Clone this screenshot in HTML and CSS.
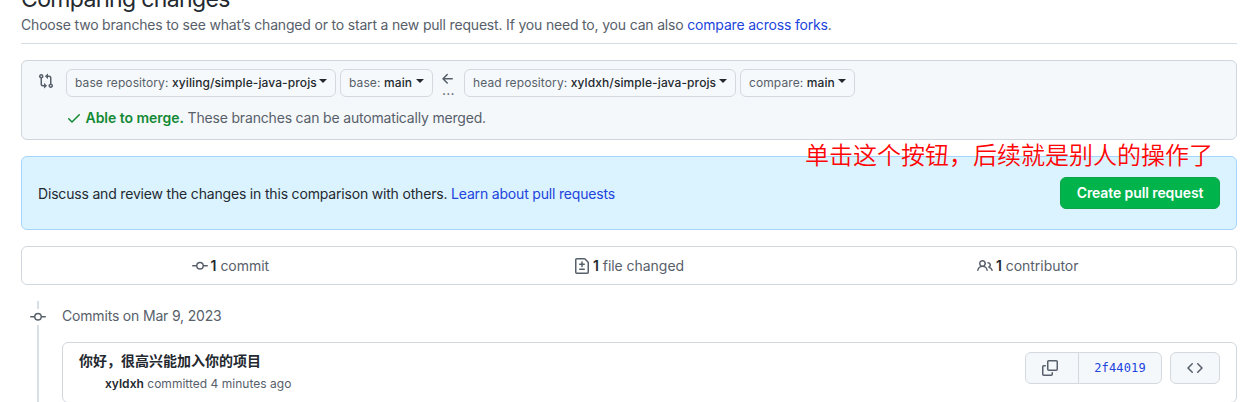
FILE: index.html
```html
<!DOCTYPE html>
<html lang="en">
<head>
<meta charset="utf-8">
<title>Comparing changes</title>
<link rel="stylesheet" href="styles.css">
</head>
<body>
<main class="page">
  <header class="subhead">
    <h1 class="title">Comparing changes</h1>
    <p class="description">Choose two branches to see what’s changed or to start a new pull request. If you need to, you can also <a class="link" href="#">compare across forks</a>.</p>
  </header>

  <section class="range">
    <svg class="icon compare-icon" width="16" height="16" viewBox="0 0 16 16"><path d="M9.573.677A.25.25 0 0 1 10 .854V2.500h1A2.500 2.500 0 0 1 13.500 5v5.628a2.251 2.251 0 1 1-1.500 0V5a1 1 0 0 0-1-1h-1v1.646a.25.25 0 0 1-.427.177L7.177 3.427a.25.25 0 0 1 0-.354ZM6 12v-1.646a.25.25 0 0 1 .427-.177l2.396 2.396a.25.25 0 0 1 0 .354l-2.396 2.396A.25.25 0 0 1 6 15.146V13.500H5A2.500 2.500 0 0 1 2.500 11V5.372a2.250 2.250 0 1 1 1.500 0V11a1 1 0 0 0 1 1ZM4 3.250a.75.75 0 1 0-1.500 0 .75.75 0 0 0 1.500 0ZM12.750 12a.75.75 0 1 0 0 1.500.75.75 0 0 0 0-1.500Z"/></svg>
    <div class="range-body">
      <div class="selectors">
        <button class="select w-base-repo"><span>base repository: <b>xyiling/simple-java-projs</b></span><i class="caret"></i></button>
        <button class="select w-base"><span>base: <b>main</b></span><i class="caret"></i></button>
        <span class="direction"><svg class="icon" width="16" height="16" viewBox="0 0 16 16"><path d="M7.780 12.530a.75.75 0 0 1-1.060 0L2.470 8.280a.75.75 0 0 1 0-1.060l4.250-4.250a.751.751 0 0 1 1.042.018.751.751 0 0 1 .018 1.042L4.810 7h7.440a.75.75 0 0 1 0 1.500H4.810l2.970 2.970a.75.75 0 0 1 0 1.060Z"/></svg><span class="dots">...</span></span>
        <button class="select w-head-repo"><span>head repository: <b>xyldxh/simple-java-projs</b></span><i class="caret"></i></button>
        <button class="select w-compare"><span>compare: <b>main</b></span><i class="caret"></i></button>
      </div>
      <p class="merge"><svg class="icon check" width="16" height="16" viewBox="0 0 16 16"><path d="M13.780 4.220a.75.75 0 0 1 0 1.060l-7.250 7.250a.75.75 0 0 1-1.060 0L2.220 9.280a.751.751 0 0 1 .018-1.042.751.751 0 0 1 1.042-.018L6 10.940l6.720-6.720a.75.75 0 0 1 1.060 0Z"/></svg><span class="merge-text"><strong class="able">Able to merge.</strong> These branches can be automatically merged.</span></p>
    </div>
  </section>

  <section class="discuss">
    <p class="discuss-text">Discuss and review the changes in this comparison with others. <a class="link" href="#">Learn about pull requests</a></p>
    <button class="create"><span>Create pull request</span></button>
    <div class="note">单击这个按钮，后续就是别人的操作了</div>
  </section>

  <ul class="stats">
    <li class="stat"><svg class="icon" width="16" height="16" viewBox="0 0 16 16"><path d="M11.930 8.500a4.002 4.002 0 0 1-7.860 0H.750a.75.75 0 0 1 0-1.500h3.320a4.002 4.002 0 0 1 7.860 0h3.320a.75.75 0 0 1 0 1.500Zm-1.430-.75a2.500 2.500 0 1 0-5 0 2.500 2.500 0 0 0 5 0Z"/></svg><span><b>1</b> commit</span></li>
    <li class="stat"><svg class="icon" width="16" height="16" viewBox="0 0 16 16"><path d="M1 1.750C1 .784 1.784 0 2.750 0h7.586c.464 0 .909.184 1.237.513l2.914 2.914c.329.328.513.773.513 1.237v9.586A1.750 1.750 0 0 1 13.250 16H2.750A1.750 1.750 0 0 1 1 14.250Zm1.750-.25a.25.25 0 0 0-.25.250v12.500c0 .138.112.250.250.250h10.500a.25.25 0 0 0 .250-.250V4.664a.25.25 0 0 0-.073-.177l-2.914-2.914a.25.25 0 0 0-.177-.073ZM8 3.250a.75.75 0 0 1 .750.750v1.500h1.500a.75.75 0 0 1 0 1.500h-1.500v1.500a.75.75 0 0 1-1.500 0V7h-1.500a.75.75 0 0 1 0-1.500h1.500V4A.75.75 0 0 1 8 3.250Zm-3 8a.75.75 0 0 1 .750-.750h4.500a.75.75 0 0 1 0 1.500h-4.500a.75.75 0 0 1-.750-.750Z"/></svg><span><b>1</b> file changed</span></li>
    <li class="stat"><svg class="icon" width="16" height="16" viewBox="0 0 16 16"><path d="M2 5.500a3.500 3.500 0 1 1 5.898 2.549 5.508 5.508 0 0 1 3.034 4.084.75.75 0 1 1-1.482.235 4 4 0 0 0-7.900 0 .75.75 0 0 1-1.482-.236A5.507 5.507 0 0 1 3.102 8.050 3.493 3.493 0 0 1 2 5.500ZM11 4a3.001 3.001 0 0 1 2.220 5.018 5.010 5.010 0 0 1 2.560 3.012.749.749 0 0 1-.885.954.752.752 0 0 1-.549-.514 3.507 3.507 0 0 0-2.522-2.372.75.75 0 0 1-.574-.730v-.352a.75.75 0 0 1 .416-.672A1.500 1.500 0 0 0 11 5.500.75.75 0 0 1 11 4Zm-5.500-.500a2 2 0 1 0-.001 3.999A2 2 0 0 0 5.500 3.500Z"/></svg><span><b>1</b> contributor</span></li>
  </ul>

  <section class="timeline">
    <div class="rail">
      <span class="rail-top"></span>
      <svg class="icon" width="16" height="16" viewBox="0 0 16 16"><path d="M11.930 8.500a4.002 4.002 0 0 1-7.860 0H.750a.75.75 0 0 1 0-1.500h3.320a4.002 4.002 0 0 1 7.860 0h3.320a.75.75 0 0 1 0 1.500Zm-1.430-.75a2.500 2.500 0 1 0-5 0 2.500 2.500 0 0 0 5 0Z"/></svg>
      <span class="rail-bottom"></span>
    </div>
    <div class="timeline-body">
      <h2 class="date">Commits on Mar 9, 2023</h2>
      <article class="commit">
        <div class="commit-info">
          <p class="commit-title">你好，很高兴能加入你的项目</p>
          <p class="commit-meta"><b>xyldxh</b> committed 4 minutes ago</p>
        </div>
        <div class="group">
          <button class="tool copy"><svg class="icon" width="16" height="16" viewBox="0 0 16 16"><path d="M0 6.750C0 5.784.784 5 1.750 5h1.500a.75.75 0 0 1 0 1.500h-1.500a.25.25 0 0 0-.250.250v7.500c0 .138.112.250.250.250h7.500a.25.25 0 0 0 .250-.250v-1.500a.75.75 0 0 1 1.500 0v1.500A1.750 1.750 0 0 1 9.250 16h-7.500A1.750 1.750 0 0 1 0 14.250Z"/><path d="M5 1.750C5 .784 5.784 0 6.750 0h7.500C15.216 0 16 .784 16 1.750v7.500A1.750 1.750 0 0 1 14.250 11h-7.500A1.750 1.750 0 0 1 5 9.250Zm1.750-.250a.25.25 0 0 0-.250.250v7.500c0 .138.112.250.250.250h7.500a.25.25 0 0 0 .250-.250v-7.500a.25.25 0 0 0-.250-.250Z"/></svg></button>
          <button class="tool sha">2f44019</button>
        </div>
        <button class="tool browse"><svg class="icon" width="16" height="16" viewBox="0 0 16 16"><path d="m11.280 3.220 4.250 4.250a.75.75 0 0 1 0 1.060l-4.250 4.250a.749.749 0 0 1-1.275-.326.749.749 0 0 1 .215-.734L13.940 8l-3.720-3.720a.749.749 0 0 1 .326-1.275.749.749 0 0 1 .734.215Zm-6.560 0a.751.751 0 0 1 1.042.018.751.751 0 0 1 .018 1.042L2.060 8l3.720 3.720a.749.749 0 0 1-.326 1.275.749.749 0 0 1-.734-.215L.470 8.530a.75.75 0 0 1 0-1.060Z"/></svg></button>
      </article>
    </div>
  </section>
</main>
</body>
</html>
```
FILE: styles.css
```css
* { box-sizing: border-box; }
html, body { height: 402px; overflow: hidden; }
body {
  margin: 0;
  background: #fff;
  color: #24292f;
  font: 14px/20px Inter, "Noto Sans CJK SC", sans-serif;
  letter-spacing: -0.18px;
}
h1, h2, p, ul { margin: 0; padding: 0; font-weight: 400; white-space: nowrap; }
b, strong { font-weight: 600; }
button { font: inherit; letter-spacing: inherit; color: inherit; padding: 0; white-space: nowrap; }
.icon { display: block; flex: none; fill: #57606a; }
.link { color: #2144dc; text-decoration: none; }
.page { width: 1216px; margin: -17px 0 0 21px; }
.subhead { height: 61px; border-bottom: 1px solid #d5dde4; margin-bottom: 16px; }
.title { font-size: 23px; line-height: 32px; letter-spacing: -0.64px; }
.description { color: #57606a; }

.range {
  display: flex; height: 80px; padding: 8px 16px 0;
  border: 1px solid #d0d7de; border-radius: 6px; background: #f5f8fb;
}
.compare-icon { margin: 4px 12px 0 0; }
.selectors { display: flex; height: 28px; font-size: 12px; letter-spacing: 0.1px; }
.select {
  display: flex; align-items: center; justify-content: space-between; height: 28px; margin-right: 4px;
  padding: 0 8px; border: 1px solid #d3d9de; border-radius: 6px; background: #f6f9fb; color: #57606a;
}
.select b { color: #24292f; font-weight: 500; }
.w-base-repo { width: 270px; }
.w-base { width: 93px; }
.w-head-repo { width: 272px; }
.w-compare { width: 115px; }
.caret { border: 4px solid transparent; border-top-color: #24292f; border-bottom: 0; margin-bottom: 4px; }
.direction { width: 20px; margin: 2px 4px 0 3px; color: #57606a; }
.dots { display: block; margin: -1px 0 0 2px; font-size: 14px; line-height: 8px; letter-spacing: 0.2px; }
.merge { display: flex; align-items: center; margin-top: 11px; color: #57606a; letter-spacing: -0.18px; }
.check { fill: #128a35; margin-right: 3.500px; }
.able { color: #128a35; letter-spacing: -0.04px; }

.discuss {
  position: relative; display: flex; align-items: center; justify-content: space-between;
  height: 74px; margin-top: 16px; padding: 0 16px;
  border: 1px solid #a5d5fc; border-radius: 6px; background: #daf3ff;
}
.discuss-text { padding-top: 2px; }
.create {
  width: 160px; height: 32px; border: 1px solid #0da449; border-radius: 6px;
  background: #00b44b; color: #fff; font-weight: 600; letter-spacing: -0.1px;
}
.note {
  position: absolute; left: 783px; top: -21px; color: #ff0505; white-space: nowrap;
  font: 350 24px/36px "Noto Sans CJK SC", sans-serif; letter-spacing: 0;
}
.stats {
  display: flex; height: 39px; margin-top: 16px; padding: 0 9px; list-style: none;
  border: 1px solid #d0d7de; border-radius: 6px; letter-spacing: -0.04px;
}
.stat { display: flex; flex: 1; align-items: center; justify-content: center; gap: 3px; color: #57606a; }
.stat b { color: #24292f; }
.timeline { display: flex; height: 120px; margin-top: 16px; }
.rail { width: 34px; margin-right: 7px; display: flex; flex-direction: column; align-items: center; }
.rail-top, .rail-bottom { width: 2px; background: #d8dfe5; }
.rail-top { height: 8px; }
.rail-bottom { flex: 1; }
.timeline-body { flex: 1; }
.date { font-size: 14px; line-height: 21px; color: #57606a; margin: 4px 0 16px; }
.commit { display: flex; height: 61px; padding: 9px 16px; border: 1px solid #d0d7de; border-radius: 6px; }
.commit-info { flex: 1; margin-top: -1px; }
.commit-title { font-weight: 600; letter-spacing: 0; }
.commit-meta { margin: 3px 0 0 26px; font-size: 12px; color: #57606a; letter-spacing: 0.02px; }
.commit-meta b { color: #24292f; }
.group { display: flex; margin-right: 8px; }
.tool {
  display: flex; align-items: center; justify-content: center; height: 32px;
  border: 1px solid #d3d9de; border-radius: 6px; background: #f5f8fb;
}
.copy { width: 54px; padding-right: 4px; border-radius: 6px 0 0 6px; }
.sha {
  width: 84px; margin-left: -1px; border-radius: 0 6px 6px 0; color: #2144dc;
  font: 12px "DejaVu Sans Mono", monospace; letter-spacing: 0.15px;
}
.browse { width: 50px; }
```
